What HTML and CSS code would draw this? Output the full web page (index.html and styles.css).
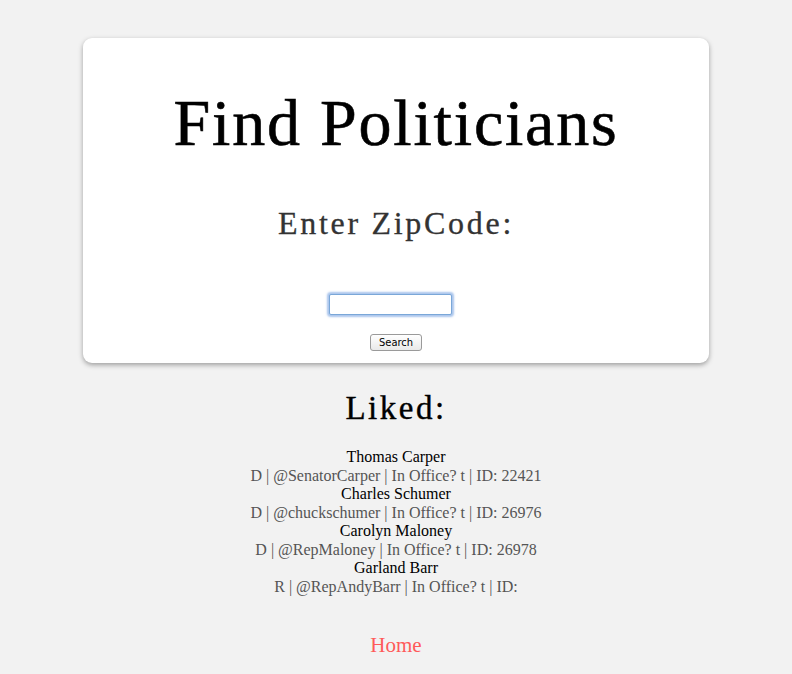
FILE: index.html
```html
<!DOCTYPE html>
<html>
<head>
<meta charset="utf-8">
<link rel="stylesheet" href="styles.css">
</head>
<body>
<div class="card">
  <h1 class="title">Find Politicians</h1>
  <h2 class="subtitle">Enter ZipCode:</h2>
  <form class="form">
    <input class="zip" type="text" autofocus>
    <button class="btn" type="button">Search</button>
  </form>
</div>
<h2 class="liked">Liked:</h2>
<div class="list">
  <div class="name">Thomas Carper</div>
  <div class="info">D | @SenatorCarper | In Office? t | ID: 22421</div>
  <div class="name">Charles Schumer</div>
  <div class="info">D | @chuckschumer | In Office? t | ID: 26976</div>
  <div class="name">Carolyn Maloney</div>
  <div class="info">D | @RepMaloney | In Office? t | ID: 26978</div>
  <div class="name">Garland Barr</div>
  <div class="info">R | @RepAndyBarr | In Office? t | ID: </div>
</div>
<a class="home" href="#">Home</a>
</body>
</html>
```
FILE: styles.css
```css
html, body {
  margin: 0;
  padding: 0;
  background: #f2f2f2;
  font-family: "Liberation Serif", "Times New Roman", serif;
}
body {
  padding-top: 38px;
  display: flex;
  flex-direction: column;
  align-items: center;
}
.card {
  width: 626px;
  height: 325px;
  box-sizing: border-box;
  background: #fff;
  border-radius: 9px;
  box-shadow: 0 2px 5px rgba(0,0,0,0.35);
  display: flex;
  flex-direction: column;
  align-items: center;
}
.title {
  margin: 47px 0 0;
  font-size: 66px;
  font-weight: normal;
  line-height: 76px;
  letter-spacing: 1.8px;
  color: #000;
  -webkit-text-stroke: 0.6px #000;
}
.subtitle {
  margin: 44px 0 0;
  font-size: 32px;
  font-weight: normal;
  line-height: 36px;
  letter-spacing: 2.7px;
  color: #333;
  -webkit-text-stroke: 0.3px #333;
}
.form {
  margin-top: 53px;
  display: flex;
  flex-direction: column;
  align-items: center;
  gap: 19px;
}
.zip {
  width: 123px;
  height: 21px;
  margin-right: 11px;
  box-sizing: border-box;
  border: 1px solid #7aa7d8;
  border-radius: 2px;
  box-shadow: 0 0 2px 2px rgba(100,150,220,0.55);
  outline: none;
  padding: 0 3px;
  font-size: 13px;
  background: #fff;
}
.btn {
  width: 52px;
  height: 17px;
  padding: 0;
  font-family: "DejaVu Sans Condensed", "DejaVu Sans", sans-serif;
  font-size: 11px;
  line-height: 15px;
  color: #000;
  background: linear-gradient(#ffffff, #e9e9e9);
  border: 1px solid #9a9a9a;
  border-radius: 3px;
}
.liked {
  margin: 25px 0 0;
  font-size: 33px;
  font-weight: normal;
  line-height: 40px;
  letter-spacing: 2.5px;
  color: #000;
  -webkit-text-stroke: 0.4px #000;
}
.list {
  margin-top: 20px;
  text-align: center;
  font-size: 16px;
  line-height: 18.5px;
}
.name { color: #000; }
.info { color: #555; }
.home {
  margin-top: 37px;
  font-size: 21px;
  color: #ff5a5a;
  text-decoration: none;
}
```
